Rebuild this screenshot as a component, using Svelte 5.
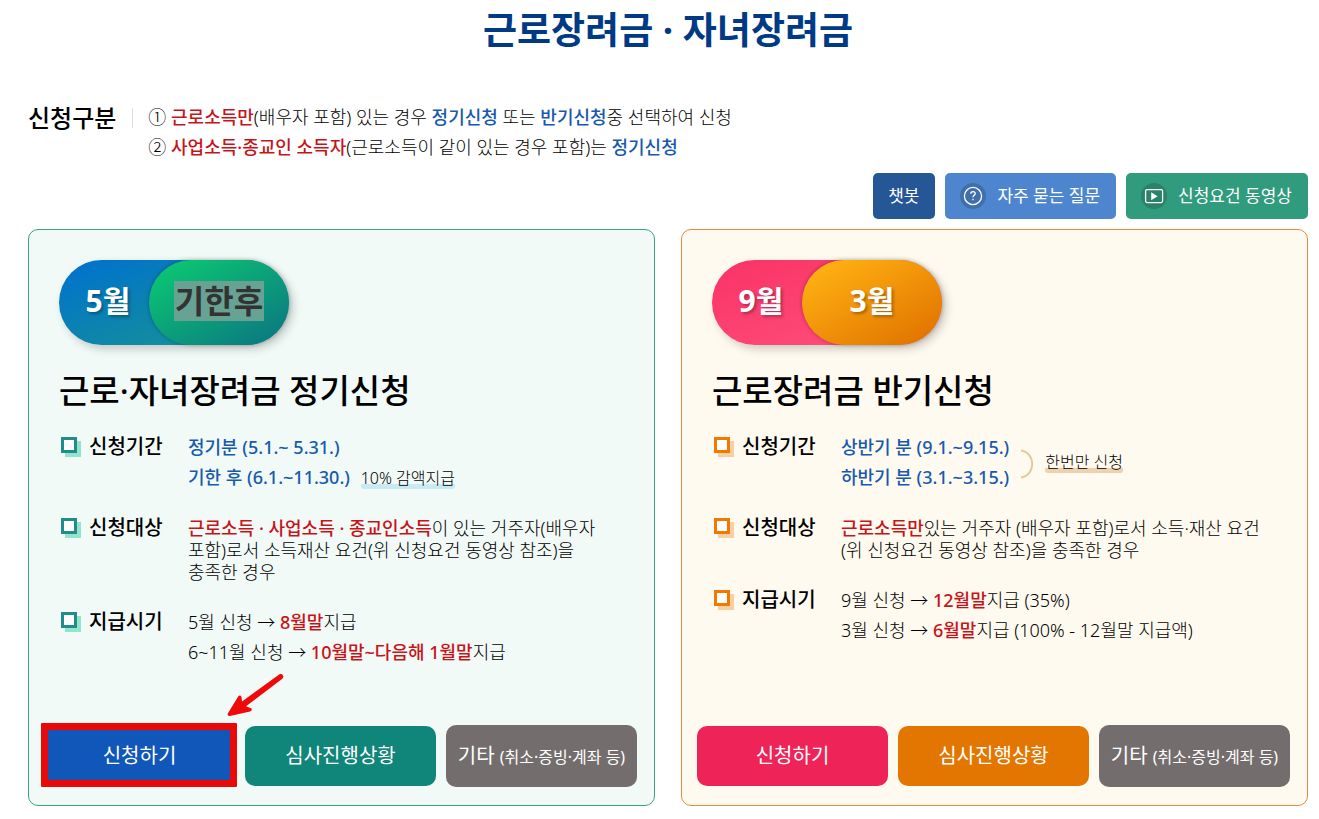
<script>
	let selected = $state('')

	const choose = (name) => {
		selected = name
	}
</script>

<main>
	<h1>근로장려금 · 자녀장려금</h1>

	<section class="guide">
		<h2>신청구분</h2>
		<ul>
			<li>① <strong class="red">근로소득만</strong>(배우자 포함) 있는 경우 <strong class="blue">정기신청</strong> 또는 <strong class="blue">반기신청</strong>중 선택하여 신청</li>
			<li>② <strong class="red">사업소득·종교인 소득자</strong>(근로소득이 같이 있는 경우 포함)는 <strong class="blue">정기신청</strong></li>
		</ul>
	</section>

	<nav class="tools">
		<button class="tool chatbot" onclick={() => choose('chatbot')}>챗봇</button>
		<button class="tool faq" onclick={() => choose('faq')}>
			<svg viewBox="0 0 26 26" width="26" height="26" fill="none" aria-hidden="true">
				<circle cx="13" cy="13" r="13" fill="#416fab" />
				<circle cx="13" cy="13" r="8.6" stroke="#fff" stroke-width="1.3" />
				<path d="M10.8 10.8c0-1.4 1-2.2 2.2-2.2s2.2.8 2.2 2c0 1.7-2.2 1.8-2.2 3.6M13 15.7v1.5" stroke="#fff" stroke-width="1.3" />
			</svg>
			자주 묻는 질문
		</button>
		<button class="tool video" onclick={() => choose('video')}>
			<svg viewBox="0 0 26 26" width="26" height="26" fill="none" aria-hidden="true">
				<circle cx="13" cy="13" r="13" fill="#2b8268" />
				<rect x="4.6" y="6.6" width="17" height="13" rx="1.5" stroke="#fff" stroke-width="1.3" />
				<path d="M10.2 9.2v8l6.3-4z" fill="#fff" />
			</svg>
			신청요건 동영상
		</button>
	</nav>

	<div class="panels">
		<section class="panel regular">
			<div class="pill">
				<span class="first">5월</span>
				<span class="second"><mark>기한후</mark></span>
			</div>
			<h2>근로·자녀장려금 정기신청</h2>
			<dl>
				<div class="row">
					<dt>신청기간</dt>
					<dd>
						<p><strong class="blue">정기분 (5.1.~ 5.31.)</strong></p>
						<p><strong class="blue">기한 후 (6.1.~11.30.)</strong> <span class="note">10% 감액지급</span></p>
					</dd>
				</div>
				<div class="row tight">
					<dt>신청대상</dt>
					<dd><strong class="red">근로소득 · 사업소득 · 종교인소득</strong>이 있는 거주자(배우자<br />포함)로서 소득재산 요건(위 신청요건 동영상 참조)을<br />충족한 경우</dd>
				</div>
				<div class="row">
					<dt>지급시기</dt>
					<dd>
						<p>5월 신청 → <strong class="red">8월말</strong>지급</p>
						<p>6~11월 신청 → <strong class="red">10월말~다음해 1월말</strong>지급</p>
					</dd>
				</div>
			</dl>
			<div class="actions">
				<div class="marked">
					<button class="apply" onclick={() => choose('regular')}>신청하기</button>
					<svg class="arrow" viewBox="0 0 58 44" width="58" height="44" aria-hidden="true">
						<path d="M52.5 1.2Q55 .5 56 2.5T55 6L19 33.3 24.5 35.5Q25.5 38 23 38.5L3 43Q0 43.5.8 40.5L11.5 23Q13.5 21.8 14.5 24L15 28.5z" fill="#f0090a" />
					</svg>
				</div>
				<button class="status" onclick={() => choose('regular-status')}>심사진행상황</button>
				<button class="etc" onclick={() => choose('regular-etc')}>기타 <small>(취소·증빙·계좌 등)</small></button>
			</div>
		</section>

		<section class="panel half">
			<div class="pill">
				<span class="first">9월</span>
				<span class="second">3월</span>
			</div>
			<h2>근로장려금 반기신청</h2>
			<dl>
				<div class="row">
					<dt>신청기간</dt>
					<dd class="once">
						<div>
							<p><strong class="blue">상반기 분 (9.1.~9.15.)</strong></p>
							<p><strong class="blue">하반기 분 (3.1.~3.15.)</strong></p>
						</div>
						<svg viewBox="0 0 13 30" width="13" height="30" fill="none" aria-hidden="true">
							<path d="M0 1.5C15 4 15 26 0 28.5" stroke="#dfcb98" stroke-width="2" />
						</svg>
						<span class="note">한번만 신청</span>
					</dd>
				</div>
				<div class="row tight">
					<dt>신청대상</dt>
					<dd><strong class="red">근로소득만</strong>있는 거주자 (배우자 포함)로서 소득·재산 요건<br />(위 신청요건 동영상 참조)을 충족한 경우</dd>
				</div>
				<div class="row">
					<dt>지급시기</dt>
					<dd>
						<p>9월 신청 → <strong class="red">12월말</strong>지급 (35%)</p>
						<p>3월 신청 → <strong class="red">6월말</strong>지급 (100% - 12월말 지급액)</p>
					</dd>
				</div>
			</dl>
			<div class="actions">
				<button class="apply" onclick={() => choose('half')}>신청하기</button>
				<button class="status" onclick={() => choose('half-status')}>심사진행상황</button>
				<button class="etc" onclick={() => choose('half-etc')}>기타 <small>(취소·증빙·계좌 등)</small></button>
			</div>
		</section>
	</div>
</main>

<style>
	:global(body) {
		background: #fff;
	}

	main {
		padding: 0 11px 13px 28px;
		font-family: "Noto Sans", "Noto Sans CJK KR", sans-serif;
		font-size: 18px;
		font-weight: 300;
		line-height: 30px;
		color: #000;
	}

	h1, h2, ul, dl, dd, p {
		margin: 0;
		padding: 0;
	}

	h1 {
		color: #003a85;
		font-size: 37px;
		font-weight: 700;
		line-height: 60px;
		text-align: center;
	}

	strong {
		font-weight: 500;
	}

	.red {
		color: #c7131a;
	}

	.blue {
		color: #1759ad;
	}

	button {
		border: 0;
		font: inherit;
		color: #fff;
		white-space: nowrap;
		cursor: pointer;
	}

	.guide {
		display: flex;
		margin-top: 42px;
	}

	.guide h2 {
		display: flex;
		align-items: center;
		height: 32px;
		font-size: 24px;
		font-weight: 500;
	}

	.guide h2::after {
		content: "";
		height: 20px;
		margin: 0 15px 0 16px;
		border-left: 1px solid #ddd;
	}

	.guide ul {
		list-style: none;
	}

	.tools {
		display: flex;
		justify-content: flex-end;
		gap: 10px;
		margin: 11px 0 10px;
	}

	.tool {
		display: flex;
		align-items: center;
		gap: 11px;
		height: 46px;
		padding: 0 16px 0 15px;
		border-radius: 5px;
		font-size: 17px;
		font-weight: 400;
	}

	.chatbot {
		background: #255797;
	}

	.faq {
		background: #4d86ce;
	}

	.video {
		background: #309b7d;
	}

	.panels {
		display: grid;
		grid-template-columns: 1fr 1fr;
		gap: 26px;
	}

	.panel {
		display: flex;
		flex-direction: column;
		padding: 30px 17px 18px 15px;
		border: 1px solid;
		border-radius: 10px;
	}

	.regular {
		background: #f1faf7;
		border-color: #3c9f87;
	}

	.half {
		background: #fffaef;
		border-color: #e18c42;
	}

	.pill {
		display: flex;
		align-self: flex-start;
		width: 230px;
		height: 85px;
		margin-left: 15px;
		border-radius: 43px;
		box-shadow: 4px 4px 10px rgba(0, 0, 0, 0.2);
		color: #fff;
		font-size: 30px;
		font-weight: 700;
		text-shadow: 2px 2px 3px rgba(0, 0, 0, 0.3);
	}

	.pill span {
		display: flex;
		align-items: center;
		justify-content: center;
		padding-bottom: 3px;
	}

	.first {
		width: 98px;
	}

	.second {
		flex: 1;
		margin-left: -8px;
		border-radius: 43px;
		box-shadow: 0 0 4px rgba(0, 0, 0, 0.3);
	}

	.regular .pill {
		background: linear-gradient(160deg, #0070d0, #118ca0 70%);
	}

	.regular .second {
		background: linear-gradient(150deg, #0bc473 10%, #0b7c80 90%);
	}

	.half .pill {
		background: linear-gradient(160deg, #f93366, #ff527d);
	}

	.half .second {
		background: linear-gradient(150deg, #ffb012 10%, #e27600 90%);
	}

	mark {
		padding: 0 1px;
		background: #68a293;
		color: #333;
		font-size: 32px;
		font-weight: 700;
		line-height: 40px;
		text-shadow: none;
	}

	.panel h2 {
		margin: 26px 0 21px 15px;
		font-size: 33px;
		font-weight: 500;
		line-height: 40px;
	}

	dl {
		display: grid;
		gap: 24px;
		margin: 0 0 58px 15px;
	}

	.row {
		display: flex;
	}

	dt {
		position: relative;
		flex: none;
		width: 99px;
		padding-left: 30px;
		font-size: 20px;
		font-weight: 500;
	}

	/* square bullet with its offset shade */
	dt::before {
		content: "";
		position: absolute;
		left: 2px;
		top: 5px;
		width: 10px;
		height: 10px;
		border: 3px solid;
		background: #fff;
	}

	.regular dt::before {
		border-color: #218c8a;
		box-shadow: 4px 4px #92e5cc;
	}

	.half dt::before {
		border-color: #f37800;
		box-shadow: 4px 4px #f7cfa5;
	}

	.tight {
		padding-top: 1px;
		line-height: 22px;
	}

	.tight dt::before {
		top: 1px;
	}

	.note {
		margin-left: 6px;
		border-radius: 3px;
		font-size: 16px;
		line-height: 22px;
	}

	.regular .note {
		background: linear-gradient(#c8eaf2, #c8eaf2) left bottom / 100% 5px no-repeat;
	}

	.half .note {
		background: linear-gradient(#eed1ad, #eed1ad) left bottom / 100% 5px no-repeat;
	}

	.once {
		display: flex;
		align-items: center;
	}

	.once svg {
		margin: 4px 5px 0 12px;
	}

	.actions {
		display: grid;
		grid-template-columns: repeat(3, 1fr);
		align-items: center;
		gap: 10px;
		margin-top: auto;
	}

	.actions button {
		width: 100%;
		height: 60px;
		padding: 0;
		border-radius: 10px;
		font-size: 20px;
		font-weight: 400;
	}

	.regular .apply {
		background: #1057b9;
	}

	.regular .status {
		background: #10857a;
	}

	.half .apply {
		background: #ee2459;
	}

	.half .status {
		background: #e37600;
	}

	.actions .etc {
		height: 62px;
		background: #736e6d;
	}

	.etc small {
		font-size: 16px;
	}

	.marked {
		position: relative;
		display: flex;
	}

	.marked::after {
		content: "";
		position: absolute;
		inset: -3px -2px -1px -3px;
		border: 7px solid #e90909;
		border-radius: 1px;
		pointer-events: none;
	}

	.arrow {
		position: absolute;
		right: -50px;
		top: -53px;
	}
</style>
